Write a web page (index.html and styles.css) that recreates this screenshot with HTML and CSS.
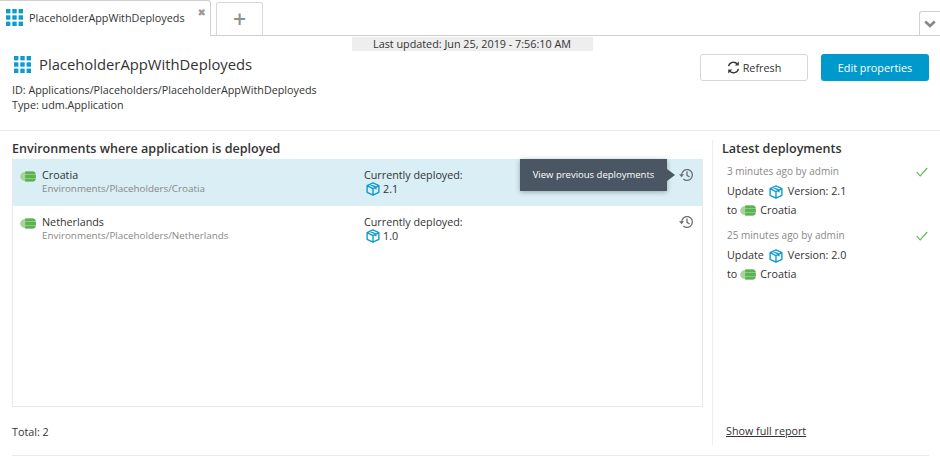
FILE: index.html
```html
<!DOCTYPE html>
<html lang="en">
<head>
<meta charset="utf-8">
<title>PlaceholderAppWithDeployeds</title>
<link rel="stylesheet" href="styles.css">
</head>
<body>
<svg class="defs" width="0" height="0" aria-hidden="true">
  <symbol id="grid" viewBox="0 0 17 17">
    <g fill="#0f9bcb">
      <rect x="0" y="0" width="4.4" height="4.4"/><rect x="6.3" y="0" width="4.4" height="4.4"/><rect x="12.6" y="0" width="4.4" height="4.4"/>
      <rect x="0" y="6.3" width="4.4" height="4.4"/><rect x="6.3" y="6.3" width="4.4" height="4.4"/><rect x="12.6" y="6.3" width="4.4" height="4.4"/>
      <rect x="0" y="12.6" width="4.4" height="4.4"/><rect x="6.3" y="12.6" width="4.4" height="4.4"/><rect x="12.6" y="12.6" width="4.4" height="4.4"/>
    </g>
  </symbol>
  <symbol id="env" viewBox="0 0 17 12">
    <path d="M6 1C2.5 1 0 3 0 6s2.5 5 6 5h4V1z" fill="#a5d59b"/>
    <path d="M5.5 0.5h8.5a3 3 0 0 1 3 3v5a3 3 0 0 1-3 3H5.5z" fill="#8ccb80"/>
    <path d="M5.5 0.5h8.5a3 3 0 0 1 2.6 2.7H5.5zM5.5 4.4h11.5v3.2H5.5zM5.5 8.8h11.1a3 3 0 0 1-2.6 2.7H5.5z" fill="#5cb252"/>
  </symbol>
  <symbol id="pkg" viewBox="0 0 15 15">
    <path d="M7.5 1L13.8 3.9V11L7.5 14L1.2 11V3.9ZM1.5 4.1L7.5 7L13.5 4.1M7.5 7V14M4.2 2.6L10.6 5.6V7.8" fill="none" stroke="#0f9bcb" stroke-width="1.5" stroke-linejoin="round"/>
  </symbol>
  <symbol id="history" viewBox="0 0 15 14">
    <path d="M2.6 7A5.4 5.4 0 1 1 4.4 11" fill="none" stroke="#6a6f73" stroke-width="1.3"/>
    <path d="M0 6.2H5L2.6 9.2Z" fill="#6a6f73"/>
    <path d="M8 3.6V7.4L10.6 9" fill="none" stroke="#6a6f73" stroke-width="1.3"/>
  </symbol>
  <symbol id="check" viewBox="0 0 12 10">
    <path d="M0.8 5.2L4.2 8.8L11.2 1" fill="none" stroke="#6fb165" stroke-width="1.2"/>
  </symbol>
</svg>

<nav class="tabbar">
  <div class="tab">
    <svg class="icon-tab"><use href="#grid"/></svg>
    <span class="tab-label">PlaceholderAppWithDeployeds</span>
    <span class="tab-close">✖</span>
  </div>
  <div class="tab-add">+</div>
  <div class="tab-menu">
    <svg width="12" height="8" viewBox="0 0 12 8"><path d="M1.2 1.5L6 6L10.8 1.5" fill="none" stroke="#85888b" stroke-width="2.6"/></svg>
  </div>
</nav>

<div class="updated-row"><span class="updated">Last updated: Jun 25, 2019 - 7:56:10 AM</span></div>

<header class="head">
  <div class="head-info">
    <h1 class="title"><svg class="icon-title"><use href="#grid"/></svg>PlaceholderAppWithDeployeds</h1>
    <div class="meta">ID: Applications/Placeholders/PlaceholderAppWithDeployeds</div>
    <div class="meta">Type: udm.Application</div>
  </div>
  <div class="actions">
    <button class="btn btn-light">
      <svg width="13" height="13" viewBox="0 0 13 13"><path d="M1.6 5.2A5 5 0 0 1 10.3 3M11.4 7.8A5 5 0 0 1 2.7 10" fill="none" stroke="#3b3b3b" stroke-width="1.5"/><path d="M11.8 0.6V4.6H7.8Z" fill="#3b3b3b"/><path d="M1.2 12.4V8.4H5.2Z" fill="#3b3b3b"/></svg>
      Refresh
    </button>
    <button class="btn btn-primary">Edit properties</button>
  </div>
</header>

<main class="content">
  <section class="envs">
    <h2 class="section-title">Environments where application is deployed</h2>
    <div class="list">
      <div class="row row-active">
        <svg class="icon-env"><use href="#env"/></svg>
        <div class="env-name">
          <div>Croatia</div>
          <div class="path">Environments/Placeholders/Croatia</div>
        </div>
        <div class="deployed">
          <div>Currently deployed:</div>
          <div class="version"><svg class="icon-pkg"><use href="#pkg"/></svg>2.1</div>
        </div>
        <svg class="icon-history"><use href="#history"/></svg>
        <div class="tooltip">View previous deployments</div>
      </div>
      <div class="row">
        <svg class="icon-env"><use href="#env"/></svg>
        <div class="env-name">
          <div>Netherlands</div>
          <div class="path">Environments/Placeholders/Netherlands</div>
        </div>
        <div class="deployed">
          <div>Currently deployed:</div>
          <div class="version"><svg class="icon-pkg"><use href="#pkg"/></svg>1.0</div>
        </div>
        <svg class="icon-history"><use href="#history"/></svg>
      </div>
    </div>
    <div class="total">Total: 2</div>
  </section>

  <aside class="latest">
    <h2 class="section-title latest-title">Latest deployments</h2>
    <article class="entry">
      <div class="entry-time"><span>3 minutes ago by admin</span><svg class="icon-check"><use href="#check"/></svg></div>
      <div class="entry-line">Update <svg class="icon-pkg-sm"><use href="#pkg"/></svg> Version: 2.1</div>
      <div class="entry-line">to <svg class="icon-env-sm"><use href="#env"/></svg> Croatia</div>
    </article>
    <article class="entry">
      <div class="entry-time"><span>25 minutes ago by admin</span><svg class="icon-check"><use href="#check"/></svg></div>
      <div class="entry-line">Update <svg class="icon-pkg-sm"><use href="#pkg"/></svg> Version: 2.0</div>
      <div class="entry-line">to <svg class="icon-env-sm"><use href="#env"/></svg> Croatia</div>
    </article>
    <a class="report" href="#">Show full report</a>
  </aside>
</main>
<div class="bottom-rule"></div>
</body>
</html>
```
FILE: styles.css
```css
* { box-sizing: border-box; }
html, body { margin: 0; padding: 0; height: 456px; overflow: hidden; }
body { background: #fff; color: #333; font: 10.75px/15px "Open Sans", sans-serif; }
.defs { position: absolute; }
h1, h2 { margin: 0; font-weight: 400; }

.tabbar { display: flex; align-items: flex-end; height: 36px; border-bottom: 1px solid #d0d0d0; }
.tab { display: flex; align-items: flex-start; width: 211px; height: 36px; margin-bottom: -1px; padding: 8px 0 0 6px; background: #fff; border-right: 1px solid #d0d0d0; border-top: 1px solid #d0d0d0; border-top-right-radius: 3px; }
.icon-tab { width: 17px; height: 17px; margin-right: 6px; }
.tab-label { color: #333; font-size: 10.8px; line-height: 17px; }
.tab-close { margin: -2px 0 0 13px; color: #999; font: 10px/12px "DejaVu Sans", sans-serif; }
.tab-add { width: 47px; height: 33px; margin-left: 5px; border: 1px solid #d8d8d8; border-bottom: 0; border-radius: 3px 3px 0 0; color: #8d9194; font: 600 23px/33px "Open Sans", sans-serif; text-align: center; }
.tab-menu { display: flex; justify-content: center; align-items: center; width: 21px; height: 24px; margin-left: auto; padding-top: 1px; border: 1px solid #d0d0d0; border-right: 0; border-bottom: 0; border-radius: 3px 0 0 0; }

.updated-row { display: flex; justify-content: center; height: 14px; margin-top: 1px; padding-left: 4px; }
.updated { width: 241px; background: #eee; color: #333; font-size: 10.8px; line-height: 14px; text-align: center; }

.head { display: flex; justify-content: space-between; height: 80px; padding: 3px 11px 0 12px; border-bottom: 1px solid #eaeaea; }
.title { display: flex; align-items: center; height: 22px; margin: -1px 0 8px 2px; color: #333; font-size: 14.8px; font-weight: 500; }
.icon-title { width: 17px; height: 17px; margin-right: 8px; }
.meta { line-height: 15px; }
.actions { display: flex; gap: 13px; }
.btn { display: flex; justify-content: center; align-items: center; gap: 3px; width: 108px; height: 27px; padding: 0; border-radius: 3px; font: 10.8px "Open Sans", sans-serif; }
.btn-light { background: #fff; border: 1px solid #d6d6d6; color: #333; }
.btn-primary { background: #0099cc; border: 0; color: #fff; }

.content { display: flex; height: 324px; padding: 9px 11px 10px 12px; }
.envs { display: flex; flex-direction: column; width: 691px; }
.section-title { margin-top: -1px; color: #333; font-size: 12.55px; font-weight: 600; line-height: 20px; }
.list { flex: none; height: 248px; border: 1px solid #e8e8e8; border-top: 0; }
.row { position: relative; display: flex; height: 47px; padding: 9px 0 0 7px; }
.row-active { background: #d9eef5; }
.icon-env { flex: none; width: 16px; height: 11px; margin: 3px 6px 0 0; }
.env-name { width: 322px; line-height: 14px; }
.path { color: #888; font-size: 9.85px; line-height: 13px; }
.deployed { width: 315px; line-height: 14px; }
.version { display: flex; align-items: center; height: 14px; }
.icon-pkg { width: 14px; height: 14px; margin: 0 3px 0 2px; }
.icon-history { flex: none; width: 15px; height: 14px; }
.tooltip { position: absolute; top: 0; right: 35px; width: 147px; height: 32px; background: #4a5663; box-shadow: 0 1px 5px rgba(0,0,0,.3); color: #fff; font-size: 9.5px; line-height: 32px; text-align: center; }
.tooltip::after { content: ""; position: absolute; top: 10px; right: -8px; border-left: 8px solid #4a5663; border-top: 6px solid transparent; border-bottom: 6px solid transparent; }
.total { margin-top: 18px; line-height: 15px; }

.latest { display: flex; flex-direction: column; width: 216px; margin-left: 9px; padding-left: 9px; border-left: 1px solid #eee; }
.latest-title { margin-bottom: 5px; }
.entry { width: 206px; padding-left: 5px; margin-bottom: 8px; }
.entry-time { display: flex; justify-content: space-between; align-items: center; height: 14px; color: #888; font-size: 10px; }
.icon-check { width: 12px; height: 10px; margin-top: 2px; }
.entry-line { display: flex; align-items: center; gap: 5px; height: 19px; }
.entry-time + .entry-line { margin-top: 4px; }
.icon-pkg-sm { width: 14px; height: 14px; }
.icon-env-sm { width: 16px; height: 11px; margin: 0 -1px 0 -2px; }
.report { margin: auto 0 6px 4px; color: #333; line-height: 15px; text-decoration: underline; }
.bottom-rule { height: 1px; margin: 0 11px 0 12px; background: #eaeaea; }
```
